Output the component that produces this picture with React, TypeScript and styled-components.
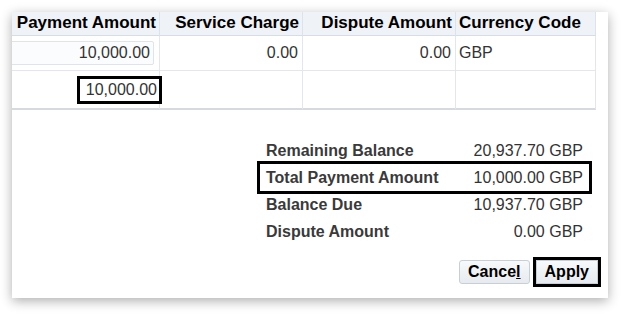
import React from 'react';
import styled, { createGlobalStyle } from 'styled-components';

const GlobalStyle = createGlobalStyle`
    html, body {
        margin: 0;
        padding: 0;
        background: #ffffff;
    }
    body {
        font-family: "Liberation Sans", Arial, sans-serif;
    }
`

const columns = [
    { title: 'Payment Amount', width: 148, align: 'right' },
    { title: 'Service Charge', width: 143, align: 'right' },
    { title: 'Dispute Amount', width: 153, align: 'right' },
    { title: 'Currency Code', width: 140, align: 'left' },
];

const summary = [
    { label: 'Remaining Balance', value: '20,937.70 GBP', marked: false },
    { label: 'Total Payment Amount', value: '10,000.00 GBP', marked: true },
    { label: 'Balance Due', value: '10,937.70 GBP', marked: false },
    { label: 'Dispute Amount', value: '0.00 GBP', marked: false },
];

function App() {
    return (
        <Page>
            <GlobalStyle />
            <Panel>
                <Table>
                    {columns.map(c => (
                        <HeadCell key={c.title} $align={c.align}>{c.title}</HeadCell>
                    ))}
                    <Cell $first>
                        <AmountInput type={'text'} defaultValue='10,000.00' />
                    </Cell>
                    <Cell $align='right'>0.00</Cell>
                    <Cell $align='right'>0.00</Cell>
                    <Cell $align='left'>GBP</Cell>
                    <Cell $last $align='right'>
                        <Marked>10,000.00</Marked>
                    </Cell>
                    <Cell $last />
                    <Cell $last />
                    <Cell $last />
                </Table>
                <Footer>
                    <Summary>
                        {summary.map(s => (
                            <SummaryRow key={s.label} $marked={s.marked}>
                                <Label>{s.label}</Label>
                                <Value>{s.value}</Value>
                            </SummaryRow>
                        ))}
                    </Summary>
                    <Actions>
                        <Button type={'button'}>Cance<u>l</u></Button>
                        <Button type={'button'} $marked>Apply</Button>
                    </Actions>
                </Footer>
            </Panel>
        </Page>
    );
}

const Page = styled.div`
    padding: 12px 19px 18px 12px;
    width: 627px;
    box-sizing: border-box;
`
const Panel = styled.section`
    width: 596px;
    background: #ffffff;
    box-shadow: 0 3px 11px rgba(0, 0, 0, 0.32);
    padding-bottom: 14px;
`
const Table = styled.div`
    display: grid;
    grid-template-columns: ${columns.map(c => `${c.width}px`).join(' ')};
    width: 584px;
`
const HeadCell = styled.div<{ $align: string }>`
    height: 24px;
    box-sizing: border-box;
    background: #eff2f7;
    border-right: 1px solid #dde3ea;
    border-bottom: 1px solid #d6dde5;
    font-size: 17px;
    font-weight: bold;
    color: #000;
    line-height: 21px;
    padding: 0 3px 0 3px;
    text-align: ${p => p.$align};
    white-space: nowrap;
    overflow: hidden;
`
const Cell = styled.div<{ $align?: string; $first?: boolean; $last?: boolean }>`
    height: ${p => (p.$last ? '39px' : '35px')};
    box-sizing: border-box;
    border-right: 1px solid #e3e7ec;
    border-bottom: ${p => (p.$last ? '2px solid #d6dadf' : '1px solid #e3e7ec')};
    display: flex;
    align-items: center;
    justify-content: ${p => (p.$align === 'left' ? 'flex-start' : 'flex-end')};
    padding: ${p => (p.$first ? '0 5px 0 0' : p.$align === 'left' ? '0 0 0 3px' : '0 4px 0 0')};
    font-size: 16px;
    color: #333;
    overflow: ${p => (p.$first ? 'hidden' : 'visible')};
`
const AmountInput = styled.input`
    flex: none;
    width: 160px;
    height: 24px;
    margin-left: -20px;
    box-sizing: border-box;
    border: 1px solid #dfe4ea;
    border-radius: 2px;
    background: #fbfcfd;
    padding: 0 3px 0 0;
    font-family: "Liberation Sans", Arial, sans-serif;
    font-size: 16px;
    color: #333;
    text-align: right;
    outline: none;
`
const Marked = styled.span`
    position: relative;
    z-index: 1;
    border: 3px solid #000;
    line-height: 22px;
    padding: 0 2px 0 6px;
    margin-right: -7px;
    margin-top: 1px;
`
const Footer = styled.div`
    display: flex;
    flex-direction: column;
    align-items: flex-end;
    padding-right: 10px;
`
const Summary = styled.div`
    margin-top: 27px;
    margin-right: 9px;
    width: 329px;
`
const SummaryRow = styled.div<{ $marked: boolean }>`
    display: flex;
    justify-content: space-between;
    align-items: center;
    height: 27px;
    padding: 0 6px;
    outline: ${p => (p.$marked ? '3px solid #000' : 'none')};
`
const Label = styled.span`
    font-size: 16px;
    font-weight: bold;
    color: #3a3a3a;
`
const Value = styled.span`
    font-size: 16px;
    color: #333;
`
const Actions = styled.div`
    display: flex;
    column-gap: 6px;
    margin-top: 15px;
`
const Button = styled.button<{ $marked?: boolean }>`
    height: 24px;
    padding: 0 8px;
    border: 1px solid #c6ced6;
    border-radius: ${p => (p.$marked ? '0' : '3px')};
    background: linear-gradient(#f7f9fa, #e7ebef);
    font-family: "Liberation Sans", Arial, sans-serif;
    font-size: 16px;
    font-weight: bold;
    color: #000;
    line-height: 22px;
    outline: ${p => (p.$marked ? '3px solid #000' : 'none')};
    u {
        text-decoration-thickness: 1px;
    }
`

export default App;
